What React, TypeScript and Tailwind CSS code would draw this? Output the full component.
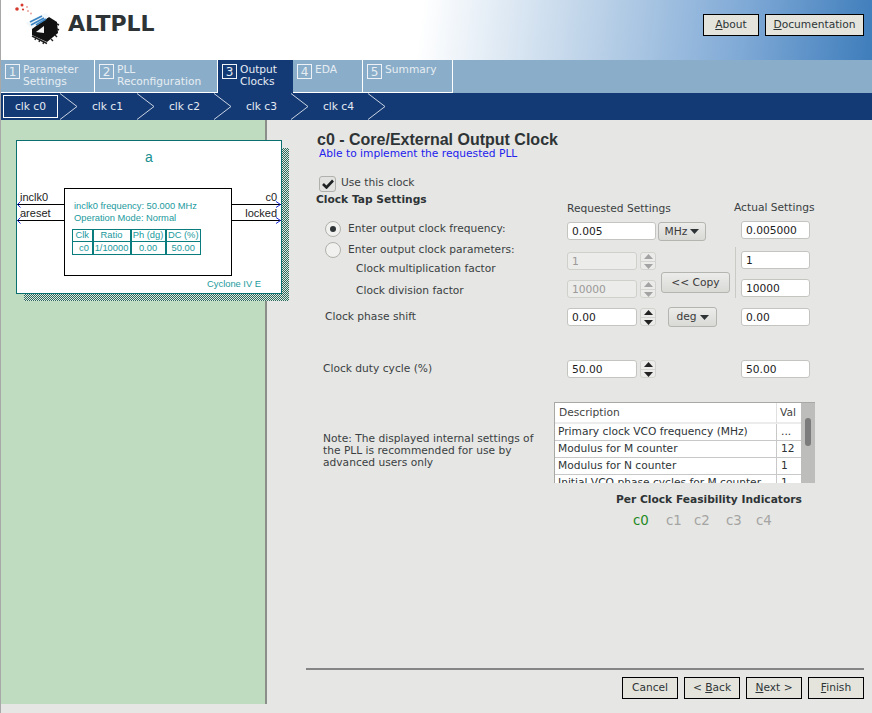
import type { ReactNode } from "react";

const tabs = [
  { num: "1", lines: ["Parameter", "Settings"], width: "w-[94px]" },
  { num: "2", lines: ["PLL", "Reconfiguration"], width: "w-[123px]" },
  { num: "3", lines: ["Output", "Clocks"], width: "w-[75px]", active: true },
  { num: "4", lines: ["EDA"], width: "w-[70px]" },
  { num: "5", lines: ["Summary"], width: "w-[90px]" },
];

const clocks = ["clk c0", "clk c1", "clk c2", "clk c3", "clk c4"];

const tableRows = [
  ["Primary clock VCO frequency (MHz)", "..."],
  ["Modulus for M counter", "12"],
  ["Modulus for N counter", "1"],
  ["Initial VCO phase cycles for M counter", "1"],
];

function Logo() {
  return (
    <svg width="60" height="48" viewBox="0 0 60 48" className="shrink-0">
      <g fill="#d8392f">
        <circle cx="16" cy="8" r="1.8" />
        <circle cx="21" cy="4" r="1.5" />
        <circle cx="22" cy="8.5" r="1.1" />
      </g>
      <g fill="#e79a90">
        <circle cx="26" cy="6" r="0.9" />
        <circle cx="27" cy="10" r="0.9" />
        <circle cx="30" cy="12.5" r="0.9" />
      </g>
      <path d="M31 27 L48 16 L56 21 L57 32 L46 41 L31 34 Z" fill="#111" />
      <path d="M31 35 L46 42.5 M35 36 L34 39 M39 38 L38 41 M43 40 L42 43 M50 38 L52 40 M54 34 L56 36 M56 28 L58 29 M56 23 L58 24" stroke="#222" strokeWidth="1.4" />
      <path d="M25 22 L44 12 L49 15 L31 28 Z" fill="#f2f7fb" />
      <path d="M29 21 L41 15 M30 24 L43 17 M35 24 L45 18" stroke="#3b84c2" strokeWidth="1.7" />
      <path d="M35 31 L43 25 L43 32 Z" fill="#f4f4f4" />
    </svg>
  );
}

function Chevron() {
  return (
    <svg width="18" height="27" viewBox="0 0 18 27" className="shrink-0">
      <path d="M0 0.5 L17 13.5 L0 26.5" fill="none" stroke="#c9d3e2" strokeWidth="1" />
    </svg>
  );
}

function HeaderButton({ children, className }: { children: ReactNode; className: string }) {
  return (
    <button className={`h-[22px] border border-black bg-[#e4e4dd] text-[10.67px] text-[#2e3436] ${className}`}>
      {children}
    </button>
  );
}

function Field({ value, disabled, className }: { value: string; disabled?: boolean; className: string }) {
  return (
    <input
      readOnly
      value={value}
      className={`h-[18px] rounded-[3px] border px-[4px] text-[10.67px] outline-none ${
        disabled ? "border-[#cfcfcb] bg-[#ececea] text-[#9a9a98]" : "border-[#c4c4c0] bg-white text-[#1c1c1c]"
      } ${className}`}
    />
  );
}

function Stepper({ disabled }: { disabled?: boolean }) {
  const fill = disabled ? "#a3a3a3" : "#222222";
  return (
    <div className="ml-[3px] flex h-[18px] w-[16px] flex-col items-center justify-center gap-[2px] rounded-[3px] border border-[#d2d2ce] bg-[#ebebe9]">
      <svg width="9" height="5" viewBox="0 0 9 5">
        <path d="M4.5 0 L9 5 L0 5 Z" fill={fill} />
      </svg>
      <div className="h-px w-full bg-[#d4d4d0]" />
      <svg width="9" height="5" viewBox="0 0 9 5">
        <path d="M0 0 L9 0 L4.5 5 Z" fill={fill} />
      </svg>
    </div>
  );
}

function Dropdown({ label, className }: { label: string; className: string }) {
  return (
    <button className={`flex h-[19px] items-center justify-center gap-[3px] rounded-[3px] border border-[#b4b4b0] bg-[linear-gradient(#ececea,#d9d9d6)] text-[10.67px] text-[#3a3a3a] ${className}`}>
      {label}
      <svg width="9" height="5" viewBox="0 0 9 5">
        <path d="M0 0 L9 0 L4.5 5 Z" fill="#2e3436" />
      </svg>
    </button>
  );
}

function Radio({ checked }: { checked?: boolean }) {
  return (
    <span className="flex h-[16px] w-[16px] shrink-0 items-center justify-center rounded-full border border-[#b0b0ac] bg-[#f1f1ef]">
      {checked && <span className="h-[6px] w-[6px] rounded-full bg-[#2e3436]" />}
    </span>
  );
}

function Diagram() {
  return (
    <div className="relative mt-[20px] ml-[16px] h-[161px] w-[273px] font-['Liberation_Sans',sans-serif]">
      <div className="absolute top-[8px] left-[8px] h-[153px] w-[265px] bg-[repeating-conic-gradient(#2d6a5e_0_25%,#dfe8e0_0_50%)] bg-[length:2px_2px]" />
      <div className="absolute top-0 left-0 h-[154px] w-[266px] border border-[#0b6f70] bg-white">
        <div className="absolute top-[6px] left-0 w-full text-center text-[14px] text-[#168f92]">a</div>
        <div className="absolute top-[47px] left-[47px] h-[88px] w-[168px] border border-black bg-white">
          <div className="mt-[11px] ml-[9px] text-[9.33px] leading-[12px] text-[#1a9a9d]">
            <div>inclk0 frequency: 50.000 MHz</div>
            <div>Operation Mode: Normal</div>
          </div>
          <table className="mt-[5px] ml-[7px] border-collapse text-[9.33px] leading-[11px] text-[#1a9a9d]">
            <tbody>
              <tr className="h-[12px] text-center">
                <td className="w-[20px] border border-r-2 border-[#0b7c7e] p-0">Clk</td>
                <td className="w-[38px] border border-r-2 border-[#0b7c7e] p-0">Ratio</td>
                <td className="w-[35px] border border-r-2 border-[#0b7c7e] p-0">Ph (dg)</td>
                <td className="w-[35px] border border-[#0b7c7e] p-0">DC (%)</td>
              </tr>
              <tr className="h-[13px] text-center">
                <td className="border border-r-2 border-[#0b7c7e] p-0 text-right">c0&nbsp;</td>
                <td className="border border-r-2 border-[#0b7c7e] p-0">1/10000</td>
                <td className="border border-r-2 border-[#0b7c7e] p-0">0.00</td>
                <td className="border border-[#0b7c7e] p-0">50.00</td>
              </tr>
            </tbody>
          </table>
        </div>
        <div className="absolute top-[63px] left-0 h-px w-[47px] bg-black" />
        <div className="absolute top-[79px] left-0 h-px w-[47px] bg-black" />
        <div className="absolute top-[63px] left-[215px] h-px w-[49px] bg-black" />
        <div className="absolute top-[79px] left-[215px] h-px w-[49px] bg-black" />
        <div className="absolute top-[50px] left-[3px] text-[11px] leading-[13px] text-[#222]">inclk0</div>
        <div className="absolute top-[66px] left-[3px] text-[11px] leading-[13px] text-[#222]">areset</div>
        <div className="absolute top-[50px] right-[4px] text-[11px] leading-[13px] text-[#222]">c0</div>
        <div className="absolute top-[66px] right-[4px] text-[11px] leading-[13px] text-[#222]">locked</div>
        <svg width="266" height="90" viewBox="0 0 266 90" className="absolute top-0 left-0">
          <path d="M3.5 60.5 L0.5 63.5 L3.5 66.5 M3.5 76.5 L0.5 79.5 L3.5 82.5" fill="none" stroke="#1c28d8" strokeWidth="1" />
          <path d="M259 60.5 L263.5 63.5 L259 66.5 M259 76.5 L263.5 79.5 L259 82.5" fill="none" stroke="#1c28d8" strokeWidth="1" />
        </svg>
        <div className="absolute top-[137px] right-[20px] text-[9.33px] leading-[12px] text-[#1a9a9d]">Cyclone IV E</div>
      </div>
    </div>
  );
}

export default function App() {
  return (
    <div className="flex h-[713px] w-[872px] flex-col overflow-hidden border-l border-[#a8a8a8] bg-[#e6e6e4] font-['DejaVu_Sans',sans-serif] text-[10.67px] text-[#3a3f42]">
      <header className="flex h-[60px] shrink-0 items-start bg-[linear-gradient(97deg,#ffffff_0%,#ffffff_48%,#bcd2e8_68%,#7fa9d6_85%,#3e7dbb_100%)]">
        <div className="mt-px">
          <Logo />
        </div>
        <div className="mt-[8px] ml-[7px] text-[22px] leading-[32px] font-bold text-[#2e3436]">ALTPLL</div>
        <div className="mt-[14px] mr-[8px] ml-auto flex gap-[6px]">
          <HeaderButton className="w-[56px]">
            <span className="underline">A</span>bout
          </HeaderButton>
          <HeaderButton className="w-[99px]">
            <span className="underline">D</span>ocumentation
          </HeaderButton>
        </div>
      </header>

      <nav className="flex h-[33px] shrink-0 bg-[#8aadc9]">
        {tabs.map((tab) => (
          <div
            key={tab.num}
            className={`flex h-full gap-[3px] border-r pt-[4px] pl-[4px] leading-[12px] ${tab.width} ${
              tab.active ? "border-[#143a75] bg-[#143a75] text-[#e4ebf3]" : "border-white border-b text-[#e6edf3]"
            }`}
          >
            <span className="flex h-[15px] w-[15px] shrink-0 items-center justify-center border border-[#eef2f6] text-[12px]">
              {tab.num}
            </span>
            <span>
              {tab.lines.map((line) => (
                <span key={line} className="block">
                  {line}
                </span>
              ))}
            </span>
          </div>
        ))}
      </nav>

      <div className="flex h-[27px] shrink-0 items-center bg-[#143a75] text-[#e4ebf3]">
        {clocks.map((clock, i) => (
          <div key={clock} className="flex items-center">
            <span
              className={`flex h-[23px] w-[55px] items-center justify-center ${
                i === 0 ? "ml-[2px] border border-white" : "ml-[2px]"
              }`}
            >
              {clock}
            </span>
            <span className="ml-[2px] flex">
              <Chevron />
            </span>
          </div>
        ))}
      </div>

      <div className="flex min-h-0 flex-1">
        <aside className="mb-[9px] w-[266px] shrink-0 border-r-2 border-[#8a8f8a] bg-[#c0dcc0]">
          <div className="-ml-px">
            <Diagram />
          </div>
        </aside>

        <main className="flex min-w-0 flex-1 flex-col pr-[8px]">
          <div className="mt-[11px] ml-[50px] font-['Liberation_Sans',sans-serif] text-[16px] leading-[18px] font-bold text-[#2e3436]">
            c0 - Core/External Output Clock
          </div>
          <div className="-mt-px ml-[52px] leading-[11px] text-[#2222ee]">Able to implement the requested PLL</div>

          <div className="mt-[6px] ml-[49px] flex">
            <div className="w-[251px] shrink-0">
              <div className="mt-[11px] ml-[3px] flex h-[16px] items-center gap-[5px]">
                <span className="flex h-[16px] w-[17px] items-center justify-center rounded-[3px] border border-[#b0b0ac] bg-[#e2e2e0]">
                  <svg width="12" height="10" viewBox="0 0 12 10">
                    <path d="M1 5 L4.5 8.5 L11 1.5" fill="none" stroke="#1f2224" strokeWidth="2.6" />
                  </svg>
                </span>
                <span className="mt-[-3px]">Use this clock</span>
              </div>
              <div className="mt-px leading-[14px] font-bold text-[#2e3436]">Clock Tap Settings</div>
              <div className="mt-[14px] ml-[9px] flex h-[16px] items-center gap-[7px]">
                <Radio checked />
                <span>Enter output clock frequency:</span>
              </div>
              <div className="mt-[5px] ml-[9px] flex h-[16px] items-center gap-[7px]">
                <Radio />
                <span>Enter output clock parameters:</span>
              </div>
              <div className="mt-[3px] ml-[40px] leading-[16px]">Clock multiplication factor</div>
              <div className="mt-[6px] ml-[40px] leading-[16px]">Clock division factor</div>
              <div className="mt-[10px] ml-[9px] leading-[16px]">Clock phase shift</div>
              <div className="mt-[36px] ml-[7px] leading-[16px]">Clock duty cycle (%)</div>
            </div>

            <div className="w-[90px] shrink-0 pt-[37px]">
              <div className="mb-[6px] leading-[14px] whitespace-nowrap">Requested Settings</div>
              <Field value="0.005" className="block w-[89px]" />
              <div className="mt-[12px] flex">
                <Field value="1" disabled className="w-[70px]" />
                <Stepper disabled />
              </div>
              <div className="mt-[10px] flex">
                <Field value="10000" disabled className="w-[70px]" />
                <Stepper disabled />
              </div>
              <div className="mt-[10px] flex">
                <Field value="0.00" className="w-[70px]" />
                <Stepper />
              </div>
              <div className="mt-[34px] flex">
                <Field value="50.00" className="w-[70px]" />
                <Stepper />
              </div>
            </div>

            <div className="w-[78px] shrink-0 pt-[57px]">
              <Dropdown label="MHz" className="ml-px w-[48px]" />
              <button className="mt-[31px] ml-[4px] block h-[21px] w-[69px] rounded-[3px] border border-[#b4b4b0] bg-[linear-gradient(#ececea,#d9d9d6)] text-[10.67px] text-[#3a3a3a]">
                &lt;&lt; Copy
              </button>
              <Dropdown label="deg" className="mt-[14px] ml-[11px] h-[20px] w-[49px]" />
            </div>

            <div className="mt-[82px] h-[51px] w-px shrink-0 self-start bg-[#c9c9c5]" />

            <div className="ml-[5px] w-[69px] shrink-0 pt-[36px]">
              <div className="mb-[6px] -ml-[7px] w-[90px] leading-[14px] whitespace-nowrap">Actual Settings</div>
              <Field value="0.005000" className="block w-[69px]" />
              <Field value="1" className="mt-[12px] block w-[69px]" />
              <Field value="10000" className="mt-[10px] block w-[69px]" />
              <Field value="0.00" className="mt-[11px] block w-[69px]" />
              <Field value="50.00" className="mt-[34px] block w-[69px]" />
            </div>
          </div>

          <div className="mt-[24px] ml-[56px] flex">
            <p className="mt-[31px] w-[220px] shrink-0 leading-[12px]">
              Note: The displayed internal settings of the PLL is recommended for use by advanced users only
            </p>
            <div className="ml-[11px] flex h-[81px] w-[261px] overflow-hidden border-t border-l border-[#a8a8a4] bg-white text-[#2e3436]">
              <div className="w-[246px] shrink-0">
                <div className="flex h-[21px] items-center border-b-2 border-[#ececec] text-[#444]">
                  <span className="w-[222px] border-r border-[#e0e0e0] pl-[4px] leading-[20px]">Description</span>
                  <span className="pl-[3px]">Val</span>
                </div>
                {tableRows.map(([label, val]) => (
                  <div key={label} className="flex h-[17px] items-center border-b border-[#c8c8c8]">
                    <span className="h-full w-[222px] shrink-0 overflow-hidden border-r border-[#c8c8c8] pl-[3px] leading-[16px] whitespace-nowrap">
                      {label}
                    </span>
                    <span className="h-full pl-[4px] leading-[16px]">{val}</span>
                  </div>
                ))}
              </div>
              <div className="relative flex-1 bg-[#bdbdbb]">
                <div className="mx-auto mt-[15px] h-[28px] w-[6px] rounded-[3px] bg-[#7c7c7c]" />
              </div>
            </div>
          </div>

          <div className="mt-[10px] ml-[349px] leading-[14px] font-bold text-[#2e3436]">Per Clock Feasibility Indicators</div>
          <div className="mt-[6px] ml-[366px] flex text-[13.33px] leading-[16px] text-[#a4a4a2]">
            <span className="w-[33px] text-[#1e8a1e]">c0</span>
            <span className="w-[28px]">c1</span>
            <span className="w-[32px]">c2</span>
            <span className="w-[30px]">c3</span>
            <span>c4</span>
          </div>

          <div className="mt-auto ml-[39px] h-[2px] bg-[#858585]" />
          <div className="mt-[7px] mb-[14px] flex justify-end gap-[6px]">
            <HeaderButton className="w-[56px]">Cancel</HeaderButton>
            <HeaderButton className="w-[56px]">
              &lt; <span className="underline">B</span>ack
            </HeaderButton>
            <HeaderButton className="w-[56px]">
              <span className="underline">N</span>ext &gt;
            </HeaderButton>
            <HeaderButton className="w-[56px]">
              <span className="underline">F</span>inish
            </HeaderButton>
          </div>
        </main>
      </div>
    </div>
  );
}
